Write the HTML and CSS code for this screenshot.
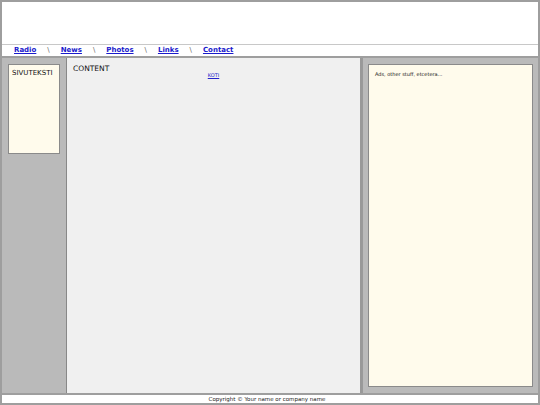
FILE: index.html
```html
<!DOCTYPE html>
<html>
<head>
<meta charset="utf-8">
<link rel="stylesheet" href="styles.css">
</head>
<body>
<div class="page">
  <div class="header"></div>
  <div class="nav">
    <a href="#">Radio</a><span class="sep">\</span>
    <a href="#">News</a><span class="sep">\</span>
    <a href="#">Photos</a><span class="sep">\</span>
    <a href="#">Links</a><span class="sep">\</span>
    <a href="#">Contact</a>
  </div>
  <div class="main">
    <div class="left">
      <div class="side-box">SIVUTEKSTI</div>
    </div>
    <div class="content">
      <div class="content-title">CONTENT</div>
      <div class="koti"><a href="#">KOTI</a></div>
    </div>
    <div class="right">
      <div class="ads">Ads, other stuff, etcetera...</div>
    </div>
  </div>
  <div class="footer">Copyright © Your name or company name</div>
</div>
</body>
</html>
```
FILE: styles.css
```css
html, body {
  margin: 0;
  padding: 0;
  background: #ffffff;
}
.page {
  width: 540px;
  height: 405px;
  box-sizing: border-box;
  border: 2px solid #9e9e9e;
  display: flex;
  flex-direction: column;
  font-family: "DejaVu Sans", Verdana, sans-serif;
}
.header {
  height: 42px;
  flex: none;
  background: #ffffff;
  border-bottom: 1px solid #c8c8c8;
}
.nav {
  height: 11px;
  flex: none;
  border-bottom: 2px solid #9e9e9e;
  background: #fff;
  font-size: 7px;
  line-height: 11px;
  padding-left: 12px;
  display: flex;
  align-items: center;
}
.nav a {
  color: #1a1acc;
  font-weight: bold;
  text-decoration: underline;
}
.nav .sep {
  color: #666;
  margin: 0 11px 0 11px;
  font-size: 7px;
}
.main {
  flex: 1;
  display: flex;
  min-height: 0;
}
.left {
  width: 65px;
  flex: none;
  background: #bababa;
  border-right: 1px solid #888;
  padding: 6px 6px 0 6px;
  box-sizing: border-box;
}
.side-box {
  height: 90px;
  box-sizing: border-box;
  background: #fffbec;
  border: 1px solid #8a8a8a;
  font-size: 7px;
  padding: 4px 3px;
  color: #111;
}
.content {
  flex: 1;
  background: #f0f0f0;
  border-right: 2px solid #999;
  padding: 6px 6px;
  font-size: 7.5px;
  color: #111;
}
.content-title {
  line-height: 9px;
}
.koti {
  text-align: center;
  font-size: 5px;
  margin-top: -1px;
}
.koti a {
  color: #2222cc;
}
.right {
  width: 176px;
  flex: none;
  background: #bababa;
  padding: 6px 5px 6px 5px;
  box-sizing: border-box;
  border-left: 1px solid #9a9a9a;
}
.ads {
  height: 100%;
  box-sizing: border-box;
  background: #fffbec;
  border: 1px solid #8a8a8a;
  font-size: 5px;
  padding: 6px 6px;
  color: #111;
}
.footer {
  height: 8px;
  flex: none;
  border-top: 2px solid #9e9e9e;
  background: #fff;
  font-size: 5.5px;
  line-height: 8px;
  text-align: center;
  padding-right: 6px;
  color: #222;
}
```
